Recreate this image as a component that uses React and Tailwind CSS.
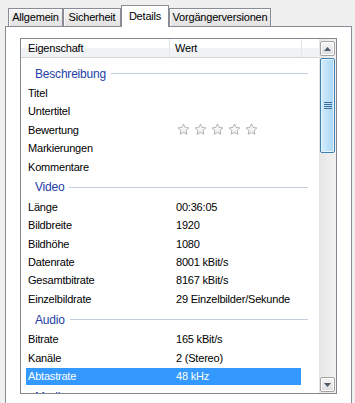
import React from 'react';

const groups = [
  {
    title: 'Beschreibung',
    rows: [
      ['Titel', ''],
      ['Untertitel', ''],
      ['Bewertung', 'stars'],
      ['Markierungen', ''],
      ['Kommentare', ''],
    ],
  },
  {
    title: 'Video',
    rows: [
      ['Länge', '00:36:05'],
      ['Bildbreite', '1920'],
      ['Bildhöhe', '1080'],
      ['Datenrate', '8001 kBit/s'],
      ['Gesamtbitrate', '8167 kBit/s'],
      ['Einzelbildrate', '29 Einzelbilder/Sekunde'],
    ],
  },
  {
    title: 'Audio',
    rows: [
      ['Bitrate', '165 kBit/s'],
      ['Kanäle', '2 (Stereo)'],
      ['Abtastrate', '48 kHz', true],
    ],
  },
  { title: 'Medien', rows: [] },
];

const tabs = [
  { label: 'Allgemein', w: 'w-[55px]' },
  { label: 'Sicherheit', w: 'w-[58px]' },
  { label: 'Details', w: 'w-[48px]', active: true },
  { label: 'Vorgängerversionen', w: 'w-[102px]' },
];

const Star = () => (
  <svg width="13" height="13" viewBox="0 0 24 24">
    <defs>
      <linearGradient id="sf" x1="0" y1="0" x2="0" y2="1">
        <stop offset="0" stopColor="#ffffff" />
        <stop offset="1" stopColor="#ececec" />
      </linearGradient>
    </defs>
    <path
      d="M12 1.8l3 6.4 7 .9-5.1 4.8 1.3 6.9L12 17.4l-6.2 3.4 1.3-6.9L2 9.1l7-.9z"
      fill="url(#sf)"
      stroke="#a9a9a9"
      strokeWidth="1.6"
      strokeLinejoin="round"
    />
  </svg>
);

const Stars = () => (
  <div className="flex gap-[4px] pl-[1px]">
    {[0, 1, 2, 3, 4].map(i => <Star key={i} />)}
  </div>
);

const Arrow = ({ up }) => (
  <svg width="7" height="4" viewBox="0 0 7 4">
    <path d={up ? 'M0 4L3.5 0L7 4z' : 'M0 0L3.5 4L7 0z'} fill="#4d5a6e" />
  </svg>
);

const ScrollButton = ({ up }) => (
  <div className="mx-[1px] h-[15px] flex items-center justify-center rounded-[2px] border border-[#a3a3a3] bg-linear-to-b from-[#f7f7f7] to-[#dcdcdc] shadow-[inset_0_0_0_1px_#ffffff]">
    <Arrow up={up} />
  </div>
);

const Scrollbar = () => (
  <div className="w-[17px] flex flex-col pt-[2px] pb-[1px] bg-linear-to-r from-[#e6e6e6] to-[#f2f2f2]">
    <ScrollButton up />
    <div className="mt-[2px] mx-[1px] h-[95px] flex items-center justify-center rounded-[2px] border border-[#3c7fb1] bg-linear-to-r from-[#d4edfc] to-[#a9d6f4] shadow-[inset_0_0_0_1px_#e6f5fe]">
      <div className="flex flex-col gap-[1px] w-[8px]">
        {[0, 1, 2, 3].map(i => (
          <div key={i} className="h-[1px] bg-[#3b6e98]" />
        ))}
      </div>
    </div>
    <div className="flex-1" />
    <ScrollButton />
  </div>
);

const GroupHeader = ({ title }) => (
  <div className="h-[22px] flex items-center pl-[14px] pr-[11px] pt-[1px] shrink-0">
    <span className="text-[#2340a6] text-[12px]">{title}</span>
    <div className="flex-1 ml-[5px] h-[1px] bg-[#c4cde0]" />
  </div>
);

const Row = ({ name, value, selected }) => (
  <div className="h-[18.4px] flex items-center shrink-0">
    <div
      className={`ml-[5px] w-[275px] h-[17px] flex items-center ${selected ? 'bg-[#3399ff] text-white' : 'text-black'}`}
    >
      <div className="w-[150px] pl-[2px]">{name}</div>
      <div className="flex-1">{value === 'stars' ? <Stars /> : value}</div>
    </div>
  </div>
);

export default function App() {
  return (
    <div className="w-[355px] h-[403px] overflow-hidden bg-[#f0f0f0] font-['Liberation_Sans',Arial,sans-serif] text-[11px] tracking-[-0.2px] text-black">
      {/* Tabs */}
      <div className="h-[26px] flex items-end pl-[8px]">
        {tabs.map(t =>
          t.active ? (
            <div
              key={t.label}
              className={`${t.w} h-[22px] -mb-[1px] relative z-10 flex items-center justify-center border border-b-0 border-[#898c95] bg-white pb-[1px]`}
            >
              {t.label}
            </div>
          ) : (
            <div
              key={t.label}
              className={`${t.w} h-[18px] flex items-center justify-center border border-b-0 border-[#898c95] bg-linear-to-b from-[#f4f4f4] to-[#e2e2e2] shadow-[inset_1px_1px_0_#fbfbfb]`}
            >
              {t.label}
            </div>
          )
        )}
      </div>

      {/* Panel */}
      <div className="ml-[5px] w-[347px] h-[390px] border border-b-0 border-[#898c95] bg-white pt-[11px] pl-[14px]">
        <div className="w-[317px] h-[356px] border border-[#828790] flex overflow-hidden">
          <div className="flex-1 flex flex-col overflow-hidden">
            {/* Header */}
            <div className="h-[19px] shrink-0 flex border-b border-[#d5d5d5] bg-linear-to-b from-white from-50% to-[#f1f2f4] to-50%">
              <div className="w-[149px] pl-[7px] flex items-center border-r border-[#e3e5e9]">Eigenschaft</div>
              <div className="w-[132px] pl-[5px] flex items-center border-r border-[#e3e5e9]">Wert</div>
              <div className="flex-1" />
            </div>
            {/* Body */}
            <div className="flex-1 flex flex-col pt-[4px] overflow-hidden">
              {groups.map(g => (
                <React.Fragment key={g.title}>
                  <GroupHeader title={g.title} />
                  {g.rows.map(([n, v, sel]) => (
                    <Row key={n} name={n} value={v} selected={sel} />
                  ))}
                </React.Fragment>
              ))}
            </div>
          </div>
          <Scrollbar />
        </div>
      </div>
    </div>
  );
}
